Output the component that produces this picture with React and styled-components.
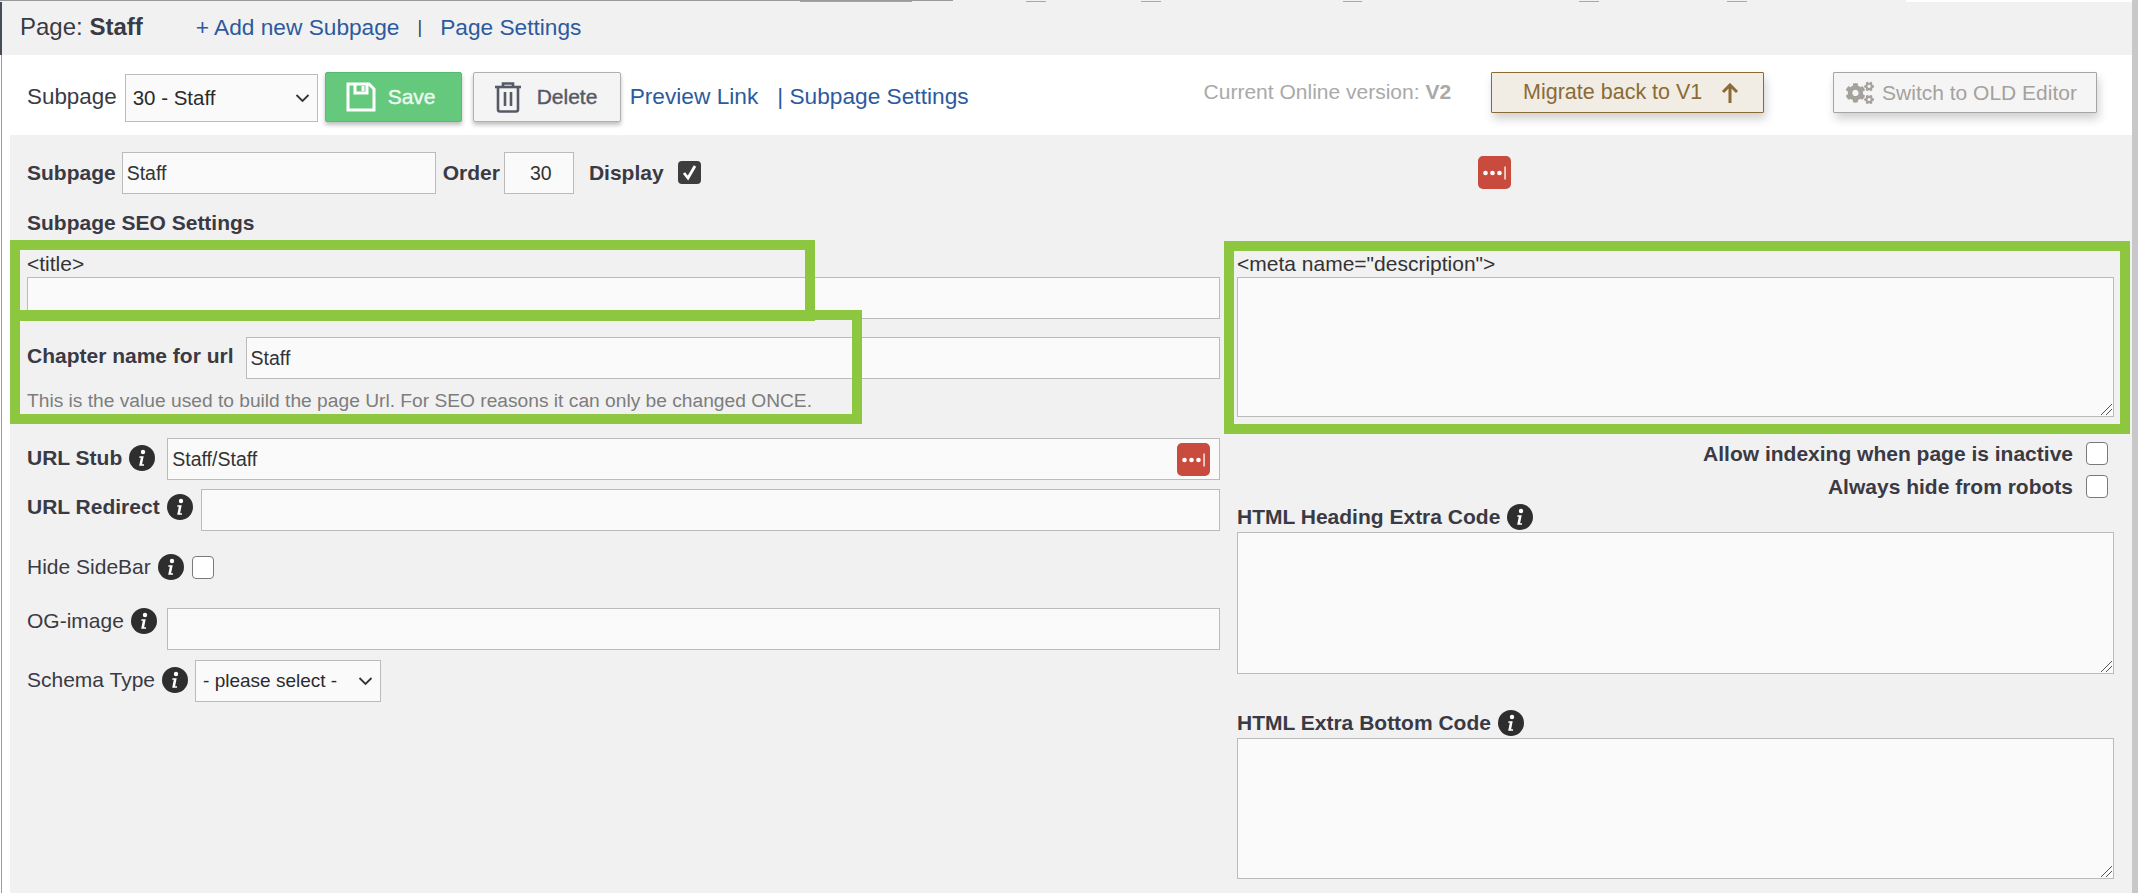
import React from "react";
import styled, { createGlobalStyle } from "styled-components";
import { FaCogs } from "react-icons/fa";

const Global = createGlobalStyle`
  html, body { margin: 0; padding: 0; background: #fff; overflow: hidden; }
  body { font-family: "Liberation Sans", Arial, sans-serif; color: #3a3a44; }
  * { box-sizing: border-box; }
`;

const Shell = styled.div`
  display: flex;
  width: 2138px;
  height: 893px;
  overflow: hidden;
`;
const Page = styled.div`
  flex: 1;
  min-width: 0;
  display: flex;
  flex-direction: column;
`;
const ScrollEdge = styled.div`
  width: 6px;
  background: #c8c8c8;
`;
const TopEdge = styled.div`
  height: 2px;
  flex: none;
  background-repeat: no-repeat;
  background-size: 100% 1px;
  background-position: top left, bottom left;
  background-image:
    linear-gradient(90deg, #9a9a9a 0 953px, #f1f1f1 953px 1906px, #fff 1906px),
    linear-gradient(
      90deg,
      #f1f1f1 0 800px,
      #a0a5ab 800px 912px,
      #f1f1f1 912px 1026px,
      #a8a8a8 1026px 1046px,
      #f1f1f1 1046px 1141px,
      #a8a8a8 1141px 1161px,
      #f1f1f1 1161px 1343px,
      #a8a8a8 1343px 1362px,
      #f1f1f1 1362px 1579px,
      #a8a8a8 1579px 1599px,
      #f1f1f1 1599px 1727px,
      #a8a8a8 1727px 1747px,
      #f1f1f1 1747px 1906px,
      #fff 1906px
    );
`;
const Frame = styled.div`
  flex: 1;
  display: flex;
  flex-direction: column;
  margin-left: 1px;
  border-left: 1px solid #9a9a9a;
`;
const PageBar = styled.div`
  height: 53px;
  flex: none;
  background: #f1f1f1;
  border-left: 2px solid #474c59;
  margin-left: -2px;
  display: flex;
  align-items: center;
  padding: 0 0 3px 18px;
`;
const PageTitle = styled.span`
  margin-right: 53px;
  font-size: 24px;
  color: #3a3a44;
`;
const Strong = styled.b`
  font-weight: 700;
`;
const Link = styled.a`
  color: #2c5a9e;
  text-decoration: none;
  font-size: 22.7px;
  white-space: nowrap;
`;
const Divider = styled.span`
  color: #3a3a44;
  font-size: 18px;
  margin: 0 18px 0 18px;
`;
const ActionBar = styled.div`
  height: 80px;
  flex: none;
  background: #fff;
  display: flex;
  align-items: flex-start;
  padding: 17px 0 0 25px;
`;
const ActionLabel = styled.span`
  font-size: 22.4px;
  line-height: 48px;
  margin-right: 8px;
  margin-top: 1px;
`;
const NativeSelect = styled.div`
  position: relative;
  width: ${(p) => p.$w}px;
  height: ${(p) => p.$h}px;
  background: #fafafa;
  border: 1px solid #bbb;
  font-size: ${(p) => p.$fs}px;
  line-height: ${(p) => p.$h - 2}px;
  padding-left: 7px;
  flex: none;
  margin-top: ${(p) => p.$mt || 0}px;
  margin-left: ${(p) => p.$ml || 0}px;
  color: #2b2b2b;
  white-space: nowrap;
`;
const Chevron = styled.svg`
  position: absolute;
  right: 7px;
  top: 50%;
  margin-top: -5px;
  width: 15px;
  height: 10px;
  fill: none;
  stroke: #333;
  stroke-width: 1.8;
`;
const BigButton = styled.div`
  height: 50px;
  width: ${(p) => p.$w}px;
  margin-left: ${(p) => p.$ml}px;
  flex: none;
  display: flex;
  align-items: center;
  gap: ${(p) => p.$gap}px;
  padding-left: ${(p) => p.$pl}px;
  border: 1px solid ${(p) => p.$border};
  border-radius: 2px;
  background: ${(p) => p.$bg};
  color: ${(p) => p.$fg};
  font-size: 21px;
  -webkit-text-stroke: 0.4px ${(p) => p.$fg};
  box-shadow: 0 3px 4px rgba(0, 0, 0, 0.25);
`;
const ActionLink = styled(Link)`
  line-height: 48px;
  margin-left: ${(p) => p.$ml}px;
`;
const VersionNote = styled.span`
  font-size: 21px;
  color: #a9a9a9;
  margin-left: 235px;
  line-height: 40px;
  white-space: nowrap;
`;
const ToolButton = styled.div`
  height: 41px;
  width: ${(p) => p.$w}px;
  margin-left: ${(p) => p.$ml}px;
  flex: none;
  display: flex;
  align-items: center;
  gap: ${(p) => p.$gap}px;
  padding-left: ${(p) => p.$pl}px;
  border: 1px solid ${(p) => p.$border};
  border-radius: 1px;
  background: ${(p) => p.$bg};
  color: ${(p) => p.$fg};
  font-size: ${(p) => p.$fs}px;
  white-space: nowrap;
  box-shadow: 2px 6px 10px rgba(0, 0, 0, 0.18);
`;
const Panel = styled.div`
  position: relative;
  flex: 1;
  margin-left: 8px;
  background: #f1f1f1;
  padding: 17px 18px 0 17px;
`;
const TopRow = styled.div`
  display: flex;
  align-items: center;
  height: 41px;
`;
const BoldLabel = styled.label`
  font-weight: 700;
  font-size: 21px;
  white-space: nowrap;
  color: #3a3a44;
  margin-left: ${(p) => p.$ml || 0}px;
`;
const PlainLabel = styled.label`
  font-size: 21px;
  white-space: nowrap;
  color: #3a3a44;
`;
const Field = styled.div`
  height: 42px;
  width: ${(p) => (p.$w ? p.$w + "px" : "auto")};
  flex: ${(p) => (p.$w ? "none" : "1")};
  position: relative;
  background: #fafafa;
  border: 1px solid #bbb;
  font-size: 19.5px;
  line-height: 40px;
  padding-left: 4px;
  color: #333;
  text-align: ${(p) => (p.$center ? "center" : "left")};
  margin-left: ${(p) => p.$ml || 0}px;
`;
const BlockField = styled.div`
  height: 42px;
  flex: none;
  background: #fafafa;
  border: 1px solid #bbb;
`;
const CheckedBox = styled.span`
  width: 23px;
  height: 23px;
  border-radius: 4px;
  background: #3d3d3d;
  display: flex;
  align-items: center;
  justify-content: center;
  margin-left: ${(p) => p.$ml}px;
  flex: none;
`;
const EmptyBox = styled.span`
  width: 22px;
  height: 23px;
  border-radius: 4px;
  background: #fff;
  border: 1.5px solid #7a7a7a;
  margin-left: ${(p) => p.$ml || 0}px;
  flex: none;
`;
const KeyBadge = styled.span`
  width: 33px;
  height: 33px;
  border-radius: 5px;
  background: #c84b3e;
  display: flex;
  align-items: center;
  justify-content: center;
  flex: none;
  margin-left: ${(p) => p.$ml || 0}px;
`;
const FieldBadge = styled(KeyBadge)`
  position: absolute;
  right: 9px;
  top: 4px;
`;
const SectionHeading = styled.div`
  font-weight: 700;
  font-size: 21px;
  margin-top: 20px;
  line-height: 20px;
`;
const Columns = styled.div`
  display: grid;
  grid-template-columns: 1193px 877px;
  column-gap: 17px;
  margin-top: 9px;
`;
const Column = styled.div`
  display: flex;
  flex-direction: column;
`;
const TagLabel = styled.div`
  font-size: 21px;
  line-height: 24px;
  height: 25px;
  margin-top: 10px;
  color: #333;
`;
const InlineRow = styled.div`
  display: flex;
  align-items: flex-start;
  flex: none;
  margin-top: ${(p) => p.$mt}px;
`;
const RowLabel = styled.span`
  display: flex;
  align-items: center;
  height: 36px;
  gap: 7px;
  flex: none;
  margin-top: ${(p) => p.$lift || 0}px;
`;
const Help = styled.div`
  font-size: 19.2px;
  color: #7d7d7d;
  margin-top: 10px;
  line-height: 24px;
  white-space: nowrap;
`;
const CheckRow = styled.div`
  display: flex;
  justify-content: flex-end;
  align-items: center;
  flex: none;
  height: 33px;
  padding-right: 6px;
  gap: 13px;
  margin-top: ${(p) => p.$mt || 0}px;
`;
const Info = styled.svg`
  width: 26px;
  height: 26px;
  flex: none;
`;
const AreaHead = styled.div`
  display: flex;
  align-items: center;
  gap: 7px;
  height: 30px;
  flex: none;
  margin-top: ${(p) => p.$mt || 0}px;
`;
const TextArea = styled.div`
  position: relative;
  flex: none;
  height: ${(p) => p.$h}px;
  background: #fafafa;
  border: 1px solid #bbb;
`;
const Grip = styled.svg`
  position: absolute;
  right: 1px;
  bottom: 1px;
  width: 12px;
  height: 12px;
  stroke: #555;
  stroke-width: 1;
`;
const Highlight = styled.div`
  position: absolute;
  left: ${(p) => p.$l}px;
  top: ${(p) => p.$t}px;
  width: ${(p) => p.$w}px;
  height: ${(p) => p.$h}px;
  border: 10px solid #8dc63f;
  pointer-events: none;
`;

const InfoIcon = () => (
  <Info viewBox="0 0 26 26">
    <circle cx="13" cy="13" r="13" fill="#2e2e2e" />
    <circle cx="14" cy="7" r="2.2" fill="#fff" />
    <path d="M10.5 11.2h4.2l-1.6 8h1.9v1.6h-4.8l1.6-8h-1.6z" fill="#fff" />
  </Info>
);
const Dots = () => (
  <svg width="25" height="14" viewBox="0 0 25 14">
    <circle cx="3.5" cy="7" r="2.3" fill="#fff" />
    <circle cx="10.5" cy="7" r="2.3" fill="#fff" />
    <circle cx="17.5" cy="7" r="2.3" fill="#fff" />
    <rect x="22.4" y="0.5" width="1.3" height="13" fill="#fff" />
  </svg>
);
const Caret = () => (
  <Chevron viewBox="0 0 15 10">
    <path d="M1.5 2l6 6 6-6" />
  </Chevron>
);
const ResizeGrip = () => (
  <Grip viewBox="0 0 12 12">
    <path d="M1 12L12 1M6 12l6-6" />
  </Grip>
);
const FloppyIcon = () => (
  <svg width="30" height="30" viewBox="0 0 30 30" fill="none" stroke="#fff" strokeWidth="3">
    <path d="M2 2h21l5 5v21H2z" />
    <path d="M9 2v9h12V2" />
    <path d="M17 4v5" />
  </svg>
);
const TrashIcon = () => (
  <svg width="28" height="32" viewBox="0 0 28 32" fill="none" stroke="#555a66" strokeWidth="2.6">
    <path d="M1 6h26" />
    <path d="M9 6V2.5h10V6" />
    <path d="M4 6v22.5a2 2 0 0 0 2 2h16a2 2 0 0 0 2-2V6" />
    <path d="M11 11v14M17 11v14" />
  </svg>
);
const ArrowUp = () => (
  <svg width="18" height="20" viewBox="0 0 18 20" fill="none" stroke="#8b6b35" strokeWidth="3">
    <path d="M9 20V2M2 9l7-7 7 7" />
  </svg>
);
const Tick = () => (
  <svg width="15" height="17" viewBox="0 0 15 17" fill="none" stroke="#fff" strokeWidth="2.8">
    <path d="M2 9l4 5 7-12" />
  </svg>
);

export default function App() {
  return (
    <Shell>
      <Global />
      <Page>
        <TopEdge />
        <Frame>
          <PageBar>
            <PageTitle>
              Page: <Strong>Staff</Strong>
            </PageTitle>
            <Link href="#">+ Add new Subpage</Link>
            <Divider>|</Divider>
            <Link href="#">Page Settings</Link>
          </PageBar>
          <ActionBar>
            <ActionLabel>Subpage</ActionLabel>
            <NativeSelect $w={193} $h={48} $mt={2} $fs={20.5}>
              30 - Staff
              <Caret />
            </NativeSelect>
            <BigButton $w={137} $ml={7} $pl={20} $gap={12} $border="#5cb974" $bg="#64c97c" $fg="#eef9f0">
              <FloppyIcon />
              <span>Save</span>
            </BigButton>
            <BigButton $w={148} $ml={11} $pl={20} $gap={15} $border="#b0b0b0" $bg="#f4f4f4" $fg="#555a66">
              <TrashIcon />
              <span>Delete</span>
            </BigButton>
            <ActionLink href="#" $ml={9}>Preview Link</ActionLink>
            <ActionLink href="#" $ml={19}>| Subpage Settings</ActionLink>
            <VersionNote>
              Current Online version: <Strong>V2</Strong>
            </VersionNote>
            <ToolButton $w={273} $ml={40} $pl={31} $gap={19} $fs={21.5} $border="#8b6b35" $bg="#f1ece4" $fg="#8b6b35">
              Migrate back to V1
              <ArrowUp />
            </ToolButton>
            <ToolButton $w={264} $ml={69} $pl={12} $gap={8} $fs={21} $border="#a5a5a5" $bg="#f5f5f5" $fg="#a5a19b">
              <FaCogs size={28} />
              Switch to OLD Editor
            </ToolButton>
          </ActionBar>
          <Panel>
            <TopRow>
              <BoldLabel>Subpage</BoldLabel>
              <Field $w={314} $ml={6}>Staff</Field>
              <BoldLabel $ml={7}>Order</BoldLabel>
              <Field $w={70} $ml={4} $center>30</Field>
              <BoldLabel $ml={15}>Display</BoldLabel>
              <CheckedBox $ml={14}><Tick /></CheckedBox>
              <KeyBadge $ml={777}><Dots /></KeyBadge>
            </TopRow>
            <SectionHeading>Subpage SEO Settings</SectionHeading>
            <Columns>
              <Column>
                <TagLabel>&lt;title&gt;</TagLabel>
                <BlockField />
                <InlineRow $mt={18}>
                  <RowLabel $lift={1}><BoldLabel>Chapter name for url</BoldLabel></RowLabel>
                  <Field $ml={12}>Staff</Field>
                </InlineRow>
                <Help>This is the value used to build the page Url. For SEO reasons it can only be changed ONCE.</Help>
                <InlineRow $mt={25}>
                  <RowLabel $lift={2}><BoldLabel>URL Stub</BoldLabel><InfoIcon /></RowLabel>
                  <Field $ml={12}>
                    Staff/Staff
                    <FieldBadge><Dots /></FieldBadge>
                  </Field>
                </InlineRow>
                <InlineRow $mt={9}>
                  <RowLabel><BoldLabel>URL Redirect</BoldLabel><InfoIcon /></RowLabel>
                  <Field $ml={8} />
                </InlineRow>
                <InlineRow $mt={18}>
                  <RowLabel><PlainLabel>Hide SideBar</PlainLabel><InfoIcon /><EmptyBox $ml={1} /></RowLabel>
                </InlineRow>
                <InlineRow $mt={23}>
                  <RowLabel $lift={-5}><PlainLabel>OG-image</PlainLabel><InfoIcon /></RowLabel>
                  <Field $ml={10} />
                </InlineRow>
                <InlineRow $mt={10}>
                  <RowLabel $lift={2}><PlainLabel>Schema Type</PlainLabel><InfoIcon /></RowLabel>
                  <NativeSelect $w={186} $h={42} $fs={19} $ml={7}>
                    - please select -
                    <Caret />
                  </NativeSelect>
                </InlineRow>
              </Column>
              <Column>
                <TagLabel>&lt;meta name="description"&gt;</TagLabel>
                <TextArea $h={140}><ResizeGrip /></TextArea>
                <CheckRow $mt={20}>
                  <BoldLabel>Allow indexing when page is inactive</BoldLabel>
                  <EmptyBox />
                </CheckRow>
                <CheckRow>
                  <BoldLabel>Always hide from robots</BoldLabel>
                  <EmptyBox />
                </CheckRow>
                <AreaHead $mt={-1}><BoldLabel>HTML Heading Extra Code</BoldLabel><InfoIcon /></AreaHead>
                <TextArea $h={142}><ResizeGrip /></TextArea>
                <AreaHead $mt={34}><BoldLabel>HTML Extra Bottom Code</BoldLabel><InfoIcon /></AreaHead>
                <TextArea $h={141}><ResizeGrip /></TextArea>
              </Column>
            </Columns>
            <Highlight $l={0} $t={105} $w={805} $h={81} />
            <Highlight $l={0} $t={175} $w={852} $h={114} />
            <Highlight $l={1214} $t={106} $w={906} $h={193} />
          </Panel>
        </Frame>
      </Page>
      <ScrollEdge />
    </Shell>
  );
}
